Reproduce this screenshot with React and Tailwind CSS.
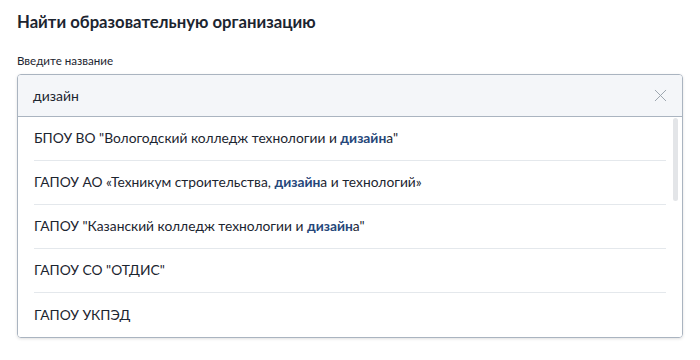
import { X } from 'lucide-react'

const QUERY = 'дизайн'

const items = [
  ['БПОУ ВО "Вологодский колледж технологии и ', 'дизайн', 'а"'],
  ['ГАПОУ АО «Техникум строительства, ', 'дизайн', 'а и технологий»'],
  ['ГАПОУ "Казанский колледж технологии и ', 'дизайн', 'а"'],
  ['ГАПОУ СО "ОТДИС"'],
  ['ГАПОУ УКПЭД'],
]

function Row({ parts, last }) {
  return (
    <div className="px-4">
      <div
        className={
          'flex h-[44px] items-center text-[13.8px] text-[#1c2530] ' +
          (last ? '' : 'border-b border-[#e4e8ec]')
        }
      >
        <span>
          {parts[0]}
          {parts[1] && <b className="font-bold text-[#26477a]">{parts[1]}</b>}
          {parts[2]}
        </span>
      </div>
    </div>
  )
}

export default function App() {
  return (
    <div className="h-[360px] w-[700px] bg-white px-[17px] pt-[10px] font-['Lato',sans-serif]">
      <h1 className="text-[16.7px] font-bold leading-[24px] text-[#1c2530]">
        Найти образовательную организацию
      </h1>
      <div className="mt-[19px] text-[11.6px] leading-[16px] text-[#1c2530]">Введите название</div>
      <div className="mt-[5px] w-[666px] overflow-hidden rounded-[4px] border border-[#aab4c0] shadow-[0_1px_3px_rgba(0,0,0,0.12)]">
        <div className="flex h-[42px] items-center justify-between border-b border-[#aab4c0] bg-[#f4f6f9] pl-[15px] pr-[11px]">
          <span className="text-[14px] text-[#1c2530]">{QUERY}</span>
          <X size={21} strokeWidth={1.1} className="text-[#9aa3ad]" />
        </div>
        <div className="relative bg-white">
          {items.map((p, i) => (
            <Row key={i} parts={p} last={i === items.length - 1} />
          ))}
          <div className="absolute right-[4px] top-[1px] h-[83px] w-[5px] rounded-full bg-[#e3e5e8]" />
        </div>
      </div>
    </div>
  )
}
